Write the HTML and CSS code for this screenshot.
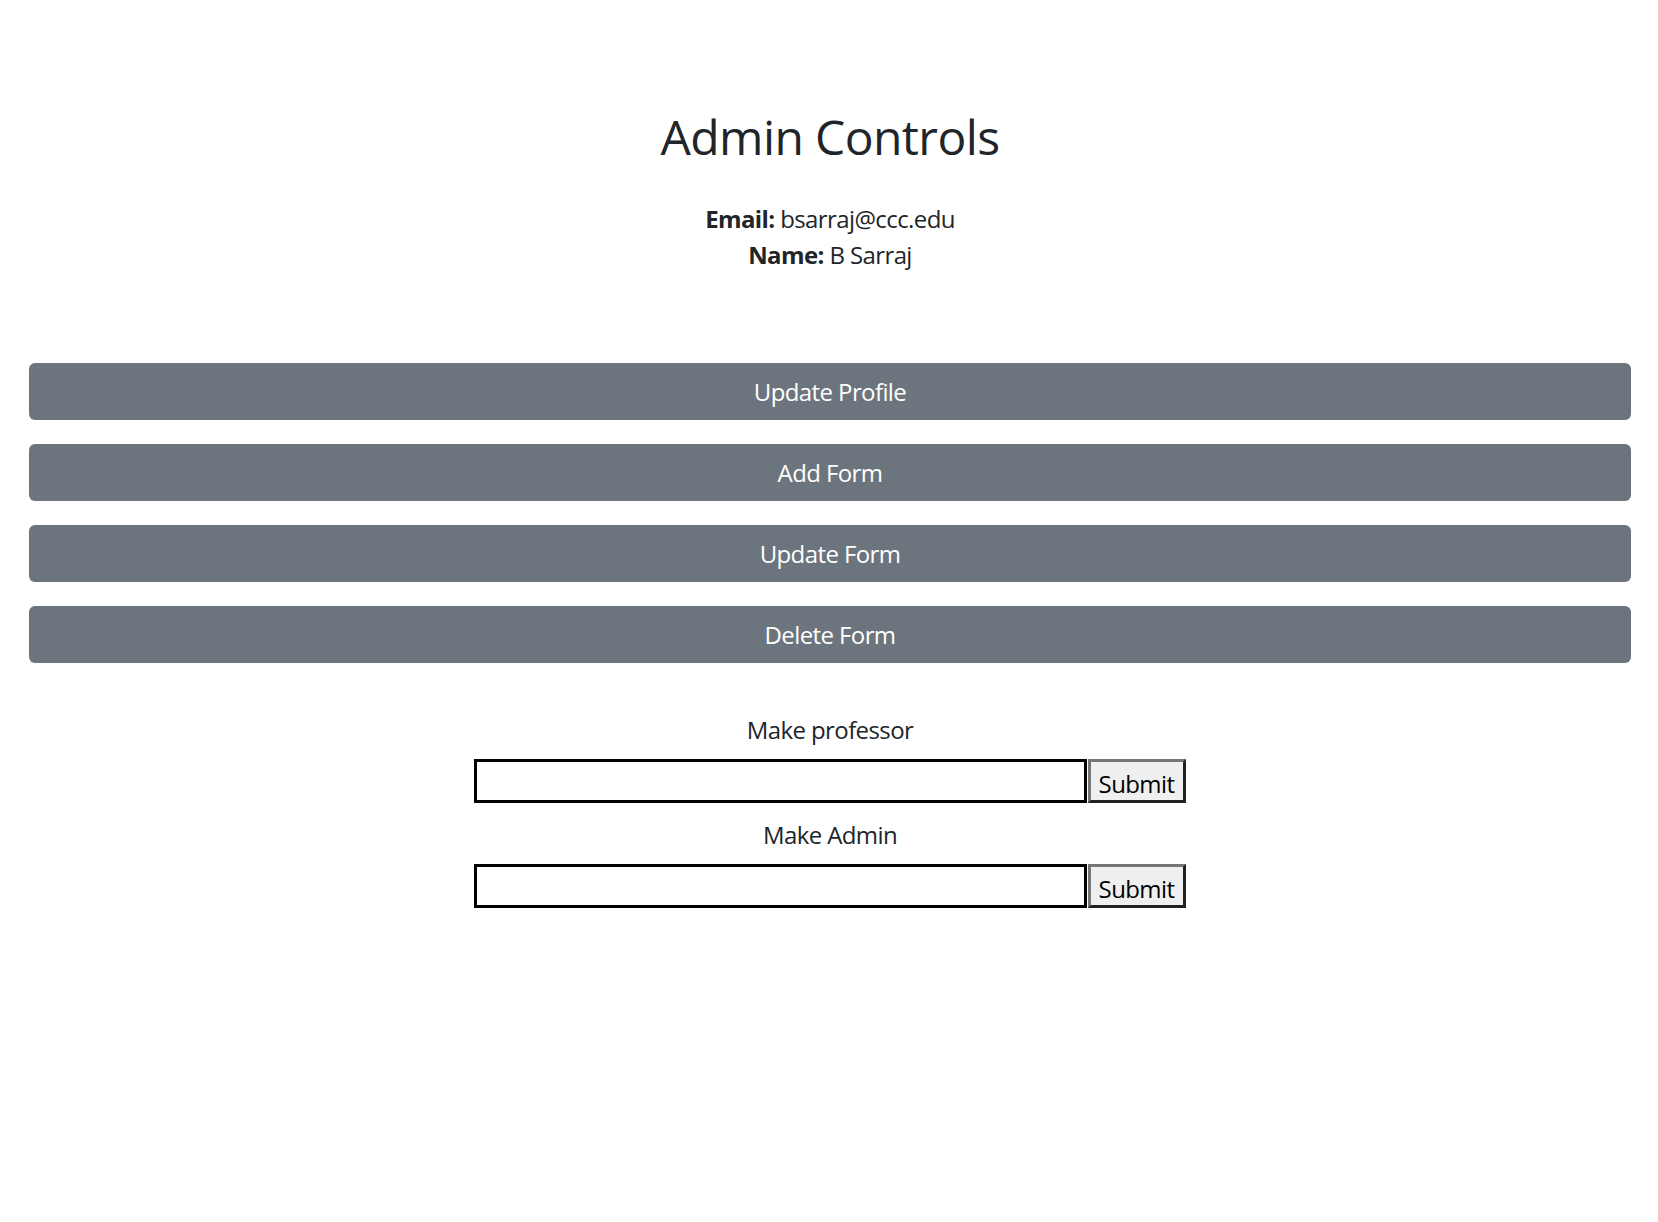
FILE: index.html
```html
<!DOCTYPE html>
<html lang="en">
<head>
<meta charset="utf-8">
<title>Admin Controls</title>
<link rel="stylesheet" href="styles.css">
</head>
<body>
<div class="page">
  <header class="profile">
    <h1 class="title">Admin Controls</h1>
    <div class="info">
      <div class="info-line"><strong>Email:</strong> bsarraj@ccc.edu</div>
      <div class="info-line"><strong>Name:</strong> B Sarraj</div>
    </div>
  </header>

  <nav class="actions">
    <button class="action-btn" type="button">Update Profile</button>
    <button class="action-btn" type="button">Add Form</button>
    <button class="action-btn" type="button">Update Form</button>
    <button class="action-btn" type="button">Delete Form</button>
  </nav>

  <section class="roles">
    <form class="role-form">
      <label class="role-label" for="prof">Make professor</label>
      <div class="role-row">
        <input class="role-input" id="prof" type="text">
        <button class="role-submit" type="submit">Submit</button>
      </div>
    </form>
    <form class="role-form">
      <label class="role-label" for="adm">Make Admin</label>
      <div class="role-row">
        <input class="role-input" id="adm" type="text">
        <button class="role-submit" type="submit">Submit</button>
      </div>
    </form>
  </section>
</div>
</body>
</html>
```

FILE: styles.css
```css
* {
  box-sizing: border-box;
}

html, body {
  margin: 0;
  padding: 0;
  background: #ffffff;
}

body {
  font-family: "Open Sans", "Noto Sans", "Liberation Sans", sans-serif;
  font-size: 24px;
  line-height: 36px;
  letter-spacing: -0.6px;
  color: #212529;
}

.page {
  padding: 108px 27px 0 29px;
}

.profile {
  display: flex;
  flex-direction: column;
  align-items: center;
}

.title {
  margin: 0;
  font-size: 48px;
  line-height: 57.6px;
  font-weight: 500;
  letter-spacing: -0.6px;
  color: #212529;
}

.info {
  margin-top: 35px;
  text-align: center;
}

.info-line strong {
  font-weight: 700;
}

.actions {
  margin-top: 90px;
  display: flex;
  flex-direction: column;
  gap: 24px;
}

.action-btn {
  display: block;
  width: 100%;
  height: 57px;
  padding: 1px 18px 0;
  border: 0;
  border-radius: 6px;
  background: #6c757d;
  color: #ffffff;
  font-family: inherit;
  font-size: 24px;
  line-height: 36px;
  letter-spacing: -0.6px;
  text-align: center;
  cursor: pointer;
}

.roles {
  margin-top: 49px;
  display: flex;
  flex-direction: column;
  align-items: center;
  gap: 14px;
}

.role-form {
  display: flex;
  flex-direction: column;
  align-items: center;
  margin: 0;
}

.role-label {
  display: block;
  line-height: 36px;
  margin-bottom: 11px;
}

.role-row {
  display: flex;
  gap: 1px;
  margin-left: -1px;
}

.role-input {
  width: 613px;
  height: 44px;
  border: 3px solid #000000;
  border-radius: 0;
  background: #ffffff;
  padding: 0 3px;
  font-family: inherit;
  font-size: 24px;
  outline: none;
}

.role-submit {
  width: 98px;
  height: 44px;
  padding: 4px 0 0;
  border: 3px outset #767676;
  border-radius: 0;
  background: #efefef;
  color: #000000;
  font-family: inherit;
  font-size: 24px;
  line-height: 36px;
  letter-spacing: -0.6px;
}
```
